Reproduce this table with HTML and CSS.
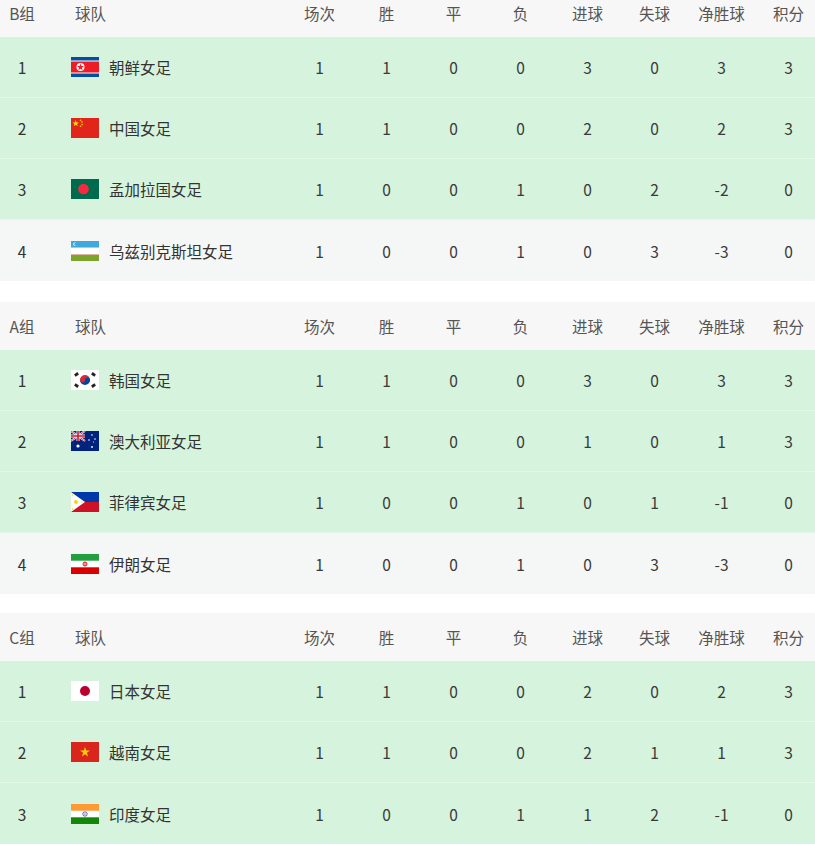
FILE: index.html
```html
<!DOCTYPE html>
<html lang="zh">
<head>
<meta charset="utf-8">
<title>积分榜</title>
<link rel="stylesheet" href="styles.css">
</head>
<body>
<div class="page">

  <section class="group">
    <div class="row head">
      <div class="c-rank">B组</div><div class="c-team head-team">球队</div>
      <div class="c">场次</div><div class="c">胜</div><div class="c">平</div><div class="c">负</div><div class="c">进球</div><div class="c">失球</div><div class="c">净胜球</div><div class="c">积分</div>
    </div>
    <div class="row q">
      <div class="c-rank">1</div>
      <div class="c-team">
        <svg class="flag" viewBox="0 0 28 20" preserveAspectRatio="none"><rect width="28" height="20" fill="#024fa2"/><rect y="3.5" width="28" height="13" fill="#fff"/><rect y="4.5" width="28" height="11" fill="#ed1c27"/><circle cx="9.5" cy="10" r="4" fill="#fff"/><polygon points="9.5,6.6 10.4,9.1 13,9.1 10.9,10.7 11.7,13.2 9.5,11.7 7.3,13.2 8.1,10.7 6,9.1 8.6,9.1" fill="#ed1c27"/></svg>
        <span>朝鲜女足</span>
      </div>
      <div class="c">1</div><div class="c">1</div><div class="c">0</div><div class="c">0</div><div class="c">3</div><div class="c">0</div><div class="c">3</div><div class="c">3</div>
    </div>
    <div class="row q">
      <div class="c-rank">2</div>
      <div class="c-team">
        <svg class="flag" viewBox="0 0 28 20" preserveAspectRatio="none"><rect width="28" height="20" fill="#e1251b"/><polygon points="4.7,2 5.5,4.4 8,4.4 6,5.9 6.8,8.3 4.7,6.8 2.6,8.3 3.4,5.9 1.4,4.4 3.9,4.4" fill="#ffde00"/><circle cx="9.5" cy="2.2" r="0.8" fill="#ffde00"/><circle cx="11" cy="4" r="0.8" fill="#ffde00"/><circle cx="11" cy="6.5" r="0.8" fill="#ffde00"/><circle cx="9.5" cy="8.3" r="0.8" fill="#ffde00"/></svg>
        <span>中国女足</span>
      </div>
      <div class="c">1</div><div class="c">1</div><div class="c">0</div><div class="c">0</div><div class="c">2</div><div class="c">0</div><div class="c">2</div><div class="c">3</div>
    </div>
    <div class="row q">
      <div class="c-rank">3</div>
      <div class="c-team">
        <svg class="flag" viewBox="0 0 28 20" preserveAspectRatio="none"><rect width="28" height="20" fill="#006a4e"/><circle cx="12.5" cy="10" r="5.3" fill="#f42a41"/></svg>
        <span>孟加拉国女足</span>
      </div>
      <div class="c">1</div><div class="c">0</div><div class="c">0</div><div class="c">1</div><div class="c">0</div><div class="c">2</div><div class="c">-2</div><div class="c">0</div>
    </div>
    <div class="row nq">
      <div class="c-rank">4</div>
      <div class="c-team">
        <svg class="flag" viewBox="0 0 28 20" preserveAspectRatio="none"><rect width="28" height="20" fill="#fff"/><rect width="28" height="6.4" fill="#3fa9dc"/><rect y="13.6" width="28" height="6.4" fill="#7ea52b"/><rect y="6.4" width="28" height="0.6" fill="#e8a0a0"/><rect y="13" width="28" height="0.6" fill="#e8a0a0"/><circle cx="4" cy="3.2" r="1.7" fill="#fff"/><circle cx="4.7" cy="3.2" r="1.5" fill="#3fa9dc"/></svg>
        <span>乌兹别克斯坦女足</span>
      </div>
      <div class="c">1</div><div class="c">0</div><div class="c">0</div><div class="c">1</div><div class="c">0</div><div class="c">3</div><div class="c">-3</div><div class="c">0</div>
    </div>
  </section>

  <section class="group tight">
    <div class="row head">
      <div class="c-rank">A组</div><div class="c-team head-team">球队</div>
      <div class="c">场次</div><div class="c">胜</div><div class="c">平</div><div class="c">负</div><div class="c">进球</div><div class="c">失球</div><div class="c">净胜球</div><div class="c">积分</div>
    </div>
    <div class="row q">
      <div class="c-rank">1</div>
      <div class="c-team">
        <svg class="flag" viewBox="0 0 28 20" preserveAspectRatio="none"><rect width="28" height="20" fill="#fff"/><path d="M9 10 a5 5 0 0 1 10 0 z" fill="#cd2e3a"/><path d="M9 10 a5 5 0 0 0 10 0 z" fill="#0047a0"/><circle cx="11.5" cy="10" r="2.5" fill="#cd2e3a"/><circle cx="16.5" cy="10" r="2.5" fill="#0047a0"/><g fill="#222"><rect x="3.5" y="3" width="4" height="2.8" transform="rotate(-35 5.5 4.4)"/><rect x="20.5" y="3" width="4" height="2.8" transform="rotate(35 22.5 4.4)"/><rect x="3.5" y="14.2" width="4" height="2.8" transform="rotate(35 5.5 15.6)"/><rect x="20.5" y="14.2" width="4" height="2.8" transform="rotate(-35 22.5 15.6)"/></g></svg>
        <span>韩国女足</span>
      </div>
      <div class="c">1</div><div class="c">1</div><div class="c">0</div><div class="c">0</div><div class="c">3</div><div class="c">0</div><div class="c">3</div><div class="c">3</div>
    </div>
    <div class="row q">
      <div class="c-rank">2</div>
      <div class="c-team">
        <svg class="flag" viewBox="0 0 28 20" preserveAspectRatio="none"><rect width="28" height="20" fill="#00247d"/><path d="M0 0 L14 10 M14 0 L0 10" stroke="#fff" stroke-width="2"/><path d="M0 0 L14 10 M14 0 L0 10" stroke="#cf142b" stroke-width="0.8"/><path d="M7 0 V10 M0 5 H14" stroke="#fff" stroke-width="3"/><path d="M7 0 V10 M0 5 H14" stroke="#cf142b" stroke-width="1.6"/><g fill="#fff"><circle cx="7" cy="15" r="1.6"/><circle cx="21" cy="4" r="0.8"/><circle cx="18" cy="9" r="0.8"/><circle cx="24" cy="8" r="0.8"/><circle cx="21" cy="16" r="0.9"/><circle cx="22.5" cy="11" r="0.5"/></g></svg>
        <span>澳大利亚女足</span>
      </div>
      <div class="c">1</div><div class="c">1</div><div class="c">0</div><div class="c">0</div><div class="c">1</div><div class="c">0</div><div class="c">1</div><div class="c">3</div>
    </div>
    <div class="row q">
      <div class="c-rank">3</div>
      <div class="c-team">
        <svg class="flag" viewBox="0 0 28 20" preserveAspectRatio="none"><rect width="28" height="10" fill="#0038a8"/><rect y="10" width="28" height="10" fill="#ce1126"/><polygon points="0,0 14,10 0,20" fill="#fff"/><circle cx="5" cy="10" r="2" fill="#fcd116"/><g fill="#fcd116"><circle cx="1.5" cy="3" r="0.7"/><circle cx="1.5" cy="17" r="0.7"/><circle cx="11" cy="10" r="0.7"/></g></svg>
        <span>菲律宾女足</span>
      </div>
      <div class="c">1</div><div class="c">0</div><div class="c">0</div><div class="c">1</div><div class="c">0</div><div class="c">1</div><div class="c">-1</div><div class="c">0</div>
    </div>
    <div class="row nq">
      <div class="c-rank">4</div>
      <div class="c-team">
        <svg class="flag" viewBox="0 0 28 20" preserveAspectRatio="none"><rect width="28" height="20" fill="#fff"/><rect width="28" height="6.7" fill="#239f40"/><rect y="13.3" width="28" height="6.7" fill="#da0000"/><circle cx="14" cy="10" r="2" fill="none" stroke="#da0000" stroke-width="0.9"/><rect x="13.6" y="8" width="0.8" height="4" fill="#da0000"/></svg>
        <span>伊朗女足</span>
      </div>
      <div class="c">1</div><div class="c">0</div><div class="c">0</div><div class="c">1</div><div class="c">0</div><div class="c">3</div><div class="c">-3</div><div class="c">0</div>
    </div>
  </section>

  <section class="group">
    <div class="row head">
      <div class="c-rank">C组</div><div class="c-team head-team">球队</div>
      <div class="c">场次</div><div class="c">胜</div><div class="c">平</div><div class="c">负</div><div class="c">进球</div><div class="c">失球</div><div class="c">净胜球</div><div class="c">积分</div>
    </div>
    <div class="row q">
      <div class="c-rank">1</div>
      <div class="c-team">
        <svg class="flag" viewBox="0 0 28 20" preserveAspectRatio="none"><rect width="28" height="20" fill="#fff"/><circle cx="14" cy="10" r="5" fill="#bc002d"/></svg>
        <span>日本女足</span>
      </div>
      <div class="c">1</div><div class="c">1</div><div class="c">0</div><div class="c">0</div><div class="c">2</div><div class="c">0</div><div class="c">2</div><div class="c">3</div>
    </div>
    <div class="row q">
      <div class="c-rank">2</div>
      <div class="c-team">
        <svg class="flag" viewBox="0 0 28 20" preserveAspectRatio="none"><rect width="28" height="20" fill="#da251d"/><polygon points="14,5 15.2,8.6 19,8.6 15.9,10.8 17.1,14.4 14,12.2 10.9,14.4 12.1,10.8 9,8.6 12.8,8.6" fill="#ffcd00"/></svg>
        <span>越南女足</span>
      </div>
      <div class="c">1</div><div class="c">1</div><div class="c">0</div><div class="c">0</div><div class="c">2</div><div class="c">1</div><div class="c">1</div><div class="c">3</div>
    </div>
    <div class="row q">
      <div class="c-rank">3</div>
      <div class="c-team">
        <svg class="flag" viewBox="0 0 28 20" preserveAspectRatio="none"><rect width="28" height="20" fill="#fff"/><rect width="28" height="6.7" fill="#ff9933"/><rect y="13.3" width="28" height="6.7" fill="#138808"/><circle cx="14" cy="10" r="2.2" fill="none" stroke="#000080" stroke-width="0.6"/><circle cx="14" cy="10" r="0.6" fill="#000080"/></svg>
        <span>印度女足</span>
      </div>
      <div class="c">1</div><div class="c">0</div><div class="c">0</div><div class="c">1</div><div class="c">1</div><div class="c">2</div><div class="c">-1</div><div class="c">0</div>
    </div>
  </section>

</div>
</body>
</html>
```

FILE: styles.css
```css
html, body {
  margin: 0;
  padding: 0;
  background: #ffffff;
  overflow: hidden;
}

body {
  font-family: "Noto Sans CJK SC", "Noto Sans", sans-serif;
  font-size: 15.5px;
  color: #333333;
}

.page {
  width: 822px;
  margin-top: -11px;
}

.group {
  margin-bottom: 21px;
}

.group.tight {
  margin-bottom: 19px;
}

.row {
  display: grid;
  grid-template-columns: 44px 242px repeat(8, 67px);
  align-items: center;
  box-sizing: border-box;
}

.row.head {
  height: 48px;
  background: #f7f7f7;
  color: #555555;
}

.row.q {
  height: 61px;
  background: #d6f3dd;
  border-bottom: 1px solid #e2f8e7;
}

.row.q:last-child {
  border-bottom: none;
}

.row.nq {
  height: 61px;
  background: #f5f6f6;
}

.c-rank {
  text-align: center;
}

.c-team {
  display: flex;
  align-items: center;
  padding-left: 27px;
}

.head-team {
  padding-left: 31px;
}

.c {
  text-align: center;
  color: #3a3a3a;
}

.head .c {
  color: #555555;
}

.flag {
  width: 28px;
  height: 20px;
  margin-right: 10px;
  flex: none;
  display: block;
}
```
